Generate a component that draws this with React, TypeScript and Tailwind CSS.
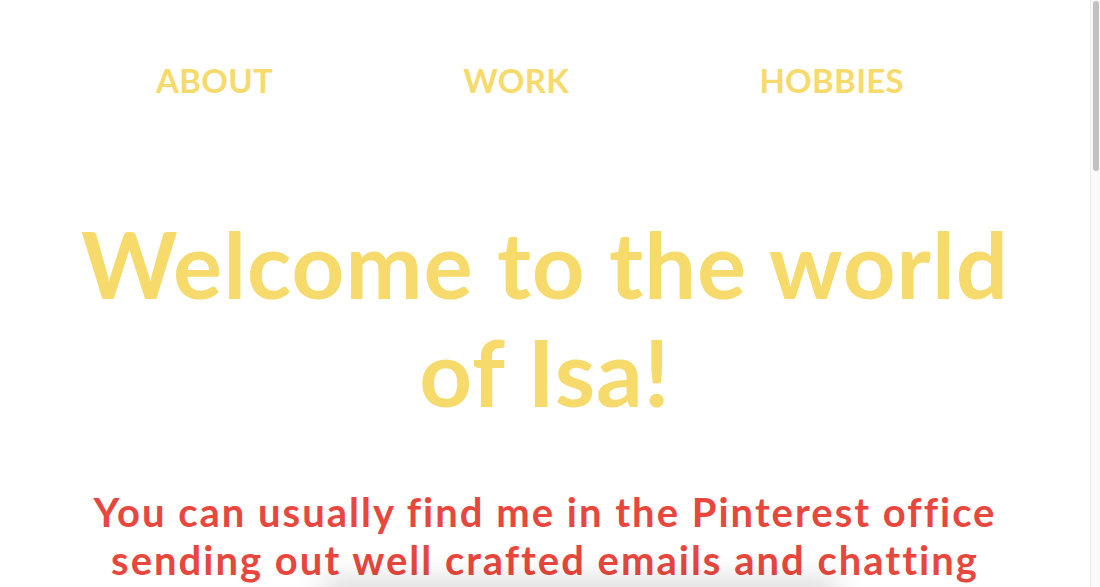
export default function App() {
  return (
    <div className="relative flex h-[587px] w-[1100px] overflow-hidden bg-white" style={{ fontFamily: 'Lato, "Open Sans", sans-serif' }}>
      <main className="flex-1">
        <nav className="ml-[61px] mt-[58px] flex w-[938px] justify-around text-[33px] font-bold leading-[44px] tracking-[0.3px] text-[#f7da6c]">
          <a>ABOUT</a>
          <a>WORK</a>
          <a>HOBBIES</a>
        </nav>
        <h1 className="mt-[108px] text-center text-[92px] font-bold leading-[108px] tracking-[1px] text-[#f7da6c]">
          Welcome to the world
          <br />
          of Isa!
        </h1>
        <p className="mt-[62px] text-center text-[40px] font-bold leading-[48px] tracking-[2px] text-[#e8473d]">
          You can usually find me in the Pinterest office
          <br />
          sending out well crafted emails and chatting
        </p>
      </main>
      <aside className="flex w-[10px] shrink-0 justify-center border-l border-[#ececec] bg-[#fafafa] pt-[1px]">
        <div className="h-[170px] w-[6px] rounded-full bg-[#c1c1c1]" />
      </aside>
      <div className="pointer-events-none absolute bottom-[-22px] left-[320px] h-[30px] w-[520px] rounded-full bg-black/15 blur-[14px]" />
    </div>
  );
}
